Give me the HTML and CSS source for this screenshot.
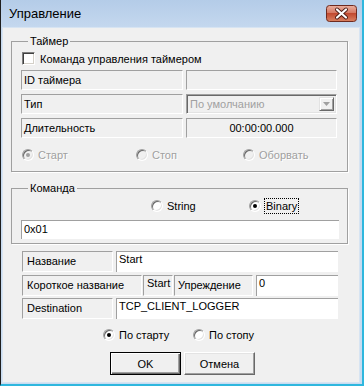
FILE: index.html
```html
<!DOCTYPE html>
<html lang="ru">
<head>
  <meta charset="UTF-8">
  <link rel="stylesheet" href="styles.css">
  <title>Управление</title>
</head>
<body>
  <div id="window">
    <div class="titlebar">
      <span class="title">Управление</span>
      <span class="close">
        <svg width="31" height="17" viewBox="0 0 31 17">
          <defs>
            <linearGradient id="red" x1="0" y1="0" x2="0" y2="1">
              <stop offset="0" stop-color="#eab0a0"/>
              <stop offset="0.45" stop-color="#d67a64"/>
              <stop offset="0.5" stop-color="#c24a30"/>
              <stop offset="1" stop-color="#d98262"/>
            </linearGradient>
          </defs>
          <rect x="0.5" y="0.5" width="30" height="16" rx="3" fill="url(#red)" stroke="#6e2a1f"/>
          <path d="M11 4.5 L20 12.5 M20 4.5 L11 12.5" stroke="#4a1a12" stroke-width="4" stroke-linecap="round"/>
          <path d="M11 4.5 L20 12.5 M20 4.5 L11 12.5" stroke="#fff" stroke-width="2.2" stroke-linecap="round"/>
        </svg>
      </span>
    </div>

    <div class="client">
      <fieldset class="group timer">
        <legend>Таймер</legend>
        <div class="check-row"><span class="checkbox"></span>Команда управления таймером</div>
        <div class="grid">
          <div class="cell caption">ID таймера</div>
          <div class="cell"></div>
          <div class="cell caption">Тип</div>
          <div class="combo">
            <span class="combo-text">По умолчанию</span>
            <span class="combo-btn">
              <svg width="7" height="4" viewBox="0 0 7 4"><path d="M0 0 H7 L3.5 4 Z" fill="#a0a0a0"/></svg>
            </span>
          </div>
          <div class="cell caption">Длительность</div>
          <div class="cell center">00:00:00.000</div>
        </div>
        <div class="options timer-opts disabled">
          <label class="opt"><span class="radio on"></span>Старт</label>
          <label class="opt"><span class="radio"></span>Стоп</label>
          <label class="opt"><span class="radio"></span>Оборвать</label>
        </div>
      </fieldset>

      <fieldset class="group command">
        <legend>Команда</legend>
        <div class="options format-opts">
          <label class="opt"><span class="radio"></span>String</label>
          <label class="opt"><span class="radio on"></span><span class="focus">Binary</span></label>
        </div>
        <div class="edit">0x01</div>
      </fieldset>

      <div class="fields">
        <div class="row">
          <div class="cell caption name-cap">Название</div>
          <div class="cell input grow">Start</div>
        </div>
        <div class="row">
          <div class="cell caption short-cap">Короткое название</div>
          <div class="cell short-val">Start</div>
          <div class="cell caption lead-cap">Упреждение</div>
          <div class="cell input grow">0</div>
        </div>
        <div class="row">
          <div class="cell caption name-cap">Destination</div>
          <div class="cell input grow">TCP_CLIENT_LOGGER</div>
        </div>
      </div>

      <div class="options mode-opts">
        <label class="opt"><span class="radio on"></span>По старту</label>
        <label class="opt"><span class="radio"></span>По стопу</label>
      </div>

      <div class="buttons">
        <button class="btn default">OK</button>
        <button class="btn">Отмена</button>
      </div>
    </div>
  </div>
</body>
</html>
```

FILE: styles.css
```css
body {
  margin: 0;
  font-family: "Liberation Sans", Arial, sans-serif;
  font-size: 11px;
  color: #000;
}

#window {
  width: 364px;
  height: 386px;
  box-sizing: border-box;
  display: flex;
  flex-direction: column;
  padding: 0 3px 2px 2px;
  background: linear-gradient(#b4cce8, #c6d9ef 30px, #c9dcf1);
  border-left: 1px solid #1e1e1e;
  border-right: 2px solid #2fb7de;
  border-bottom: 2px solid #2fb7de;
}

/* title bar */
.titlebar {
  height: 28px;
  display: flex;
  align-items: flex-start;
  justify-content: space-between;
}

.title {
  margin: 6px 0 0 6px;
  font-size: 13px;
}

.close {
  margin: 5px 2px 0 0;
  height: 17px;
}

.close svg {
  display: block;
}

/* client area */
.client {
  flex: 1;
  background: #f0f0f0;
  box-shadow: 0 0 0 1px #d7e4f2;
}

.group {
  width: 337px;
  box-sizing: border-box;
  margin: 0 0 0 8px;
  border: 1px solid #a0a0a0;
  box-shadow: 1px 1px 0 #fff;
  min-inline-size: 0;
}

.group legend {
  padding: 0 2px;
  margin-left: 7px;
  line-height: 14px;
}

.timer {
  margin-top: 6px;
  padding: 4px 1px 9px 9px;
}

.command {
  margin-top: 9px;
  padding: 4px 1px 4px 9px;
}

.check-row {
  display: flex;
  align-items: center;
  gap: 5px;
  height: 13px;
  padding-left: 1px;
}

.checkbox {
  width: 13px;
  height: 13px;
  box-sizing: border-box;
  background: #fff;
  border: 1px solid;
  border-color: #808080 #fff #fff #808080;
  box-shadow: inset 1px 1px 0 #404040, inset -1px -1px 0 #d4d0c8;
}

.grid {
  display: grid;
  grid-template-columns: 162px 151px;
  grid-auto-rows: 20px;
  column-gap: 3px;
  row-gap: 4px;
  margin-top: 5px;
}

.cell {
  box-sizing: border-box;
  border: 1px solid;
  border-color: #a0a0a0 #fff #fff #a0a0a0;
  background: #f0f0f0;
  padding: 0 2px;
  display: flex;
  align-items: center;
  white-space: nowrap;
  overflow: hidden;
}

.cell.center {
  justify-content: center;
}

.combo {
  display: flex;
  box-sizing: border-box;
  border: 1px solid;
  border-color: #a0a0a0 #fff #fff #a0a0a0;
  box-shadow: inset 1px 1px 0 #696969, inset -1px -1px 0 #e3e3e3;
  padding: 2px;
}

.combo-text {
  flex: 1;
  color: #a0a0a0;
  line-height: 14px;
  padding-left: 1px;
}

.combo-btn {
  width: 15px;
  box-sizing: border-box;
  border: 1px solid;
  border-color: #e3e3e3 #696969 #696969 #e3e3e3;
  box-shadow: inset 1px 1px 0 #fff, inset -1px -1px 0 #a0a0a0;
  display: flex;
  align-items: center;
  justify-content: center;
}

/* radio buttons */
.options {
  display: flex;
  height: 14px;
  align-items: center;
}

.opt {
  display: flex;
  align-items: center;
  gap: 4px;
}

.radio {
  width: 12px;
  height: 12px;
  box-sizing: border-box;
  border-radius: 50%;
  background: #fff;
  border: 1px solid;
  border-color: #a0a0a0 #fff #fff #a0a0a0;
  box-shadow: inset 1px 1px 0 #696969, inset -1px -1px 0 #e3e3e3;
  display: flex;
  align-items: center;
  justify-content: center;
}

.radio.on::after {
  content: "";
  width: 4px;
  height: 4px;
  border-radius: 50%;
  background: #000;
}

.disabled .opt {
  color: #a0a0a0;
  text-shadow: 1px 1px 0 #fff;
}

.disabled .radio {
  background: #f0f0f0;
}

.disabled .radio.on::after {
  background: #a0a0a0;
}

.timer-opts {
  margin-top: 10px;
  padding-left: 1px;
}

.timer-opts .opt:nth-child(1) { width: 114px; }
.timer-opts .opt:nth-child(2) { width: 107px; }

.format-opts {
  padding-left: 130px;
}

.format-opts .opt:first-child { width: 98px; }

.focus {
  outline: 1px dotted #000;
  padding: 0 1px;
  line-height: 14px;
}

.edit {
  margin-top: 7px;
  width: 318px;
  height: 19px;
  box-sizing: border-box;
  background: #fff;
  border-top: 1px solid #a0a0a0;
  border-left: 1px solid #a0a0a0;
  padding: 2px 2px 0;
}

/* bottom fields */
.fields {
  margin: 7px 0 0 19px;
  width: 316px;
}

.row {
  display: flex;
  height: 21px;
  gap: 3px;
}

.row + .row {
  margin-top: 3px;
}

.row:last-child {
  margin-top: 2px;
}

.row .caption {
  padding: 3px 0 0 4px;
  align-items: flex-start;
}

.name-cap { width: 91px; }
.short-cap { width: 120px; }
.lead-cap { width: 79px; }

.row .short-cap + .short-val {
  margin-left: -2px;
}

.short-val {
  width: 30px;
  align-items: flex-start;
  padding: 1px 3px 0;
}

.row .lead-cap {
  margin-left: -2px;
  padding-left: 3px;
}

.input {
  background: #fff;
  border-right: 0;
  border-bottom: 0;
  align-items: flex-start;
  padding: 1px 2px 0;
}

.grow {
  flex: 1;
}

.mode-opts {
  margin-top: 9px;
  padding-left: 100px;
}

.mode-opts .opt:first-child { width: 90px; }

.buttons {
  display: flex;
  gap: 3px;
  margin-top: 10px;
  padding-left: 107px;
}

.btn {
  width: 71px;
  height: 23px;
  padding: 0;
  font: inherit;
  color: #000;
  background: #f0f0f0;
  border: 1px solid;
  border-color: #fff #696969 #696969 #fff;
  box-shadow: inset -1px -1px 0 #a0a0a0, inset 1px 1px 0 #e3e3e3;
}

.btn.default {
  border-color: #000;
  box-shadow: inset 1px 1px 0 #fff, inset -1px -1px 0 #696969, inset -2px -2px 0 #a0a0a0;
}
```
